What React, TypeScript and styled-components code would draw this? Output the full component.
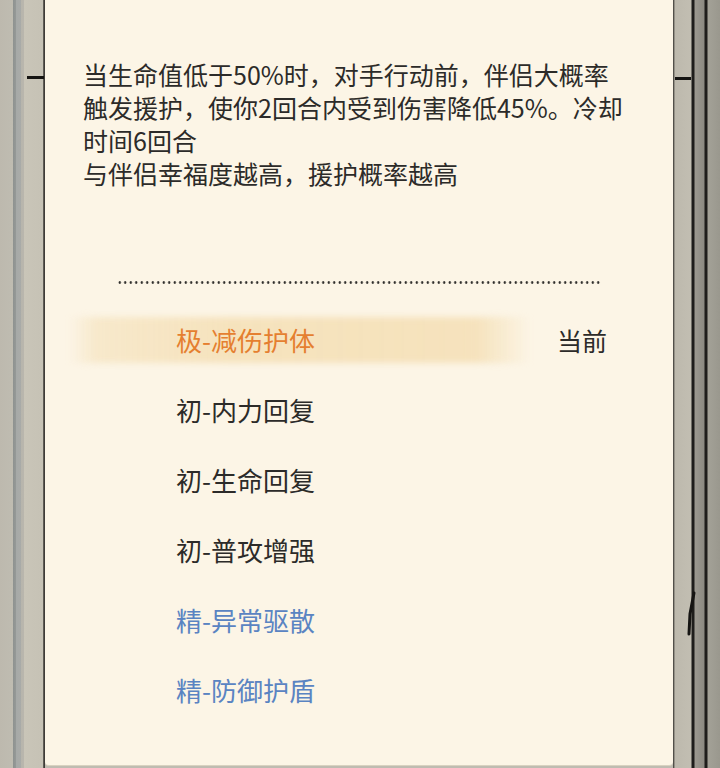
import React from "react";
import styled, { createGlobalStyle } from "styled-components";

const Global = createGlobalStyle`
  html, body { margin: 0; padding: 0; }
  body { background: #bfbcb1; font-family: "Noto Sans CJK SC", "Noto Sans", sans-serif; }
`;

const Page = styled.div`
  display: flex;
  width: 720px;
  height: 768px;
  overflow: hidden;
  background: #bfbcb1;
`;

const LeftFrame = styled.div`
  position: relative;
  width: 45px;
  flex: none;
  background: linear-gradient(
    to right,
    #bdb9ae 0px,
    #bfbcb1 13px,
    #8e9290 13px,
    #959997 16px,
    #a6a9a7 16px,
    #a9aba8 21px,
    #b7b5ac 21px,
    #b9b6ad 24px,
    #c9c5b8 24px,
    #c6c2b5 43px,
    #6e6b63 43px,
    #2f2d2a 45px
  );
`;

const RightFrame = styled.div`
  position: relative;
  flex: 1;
  background: linear-gradient(
    to right,
    #3a3834 0px,
    #6a675f 1px,
    #bdb9ad 2px,
    #c2beb2 18px,
    #1e1d1b 19px,
    #1e1d1b 21px,
    #9b988f 22px,
    #8c8a82 31px,
    #1e1d1b 32px,
    #1e1d1b 34px,
    #a3a197 35px,
    #99978d 48px
  );
`;

const Notch = styled.div<{ $left: number; $width: number; $top: number }>`
  position: absolute;
  top: ${(p) => p.$top}px;
  left: ${(p) => p.$left}px;
  width: ${(p) => p.$width}px;
  height: 3px;
  background: #151412;
`;

const Scratch = styled.svg`
  position: absolute;
  left: 12px;
  top: 590px;
`;

const Panel = styled.div`
  width: 628px;
  flex: none;
  height: 766px;
  box-sizing: border-box;
  background: #fcf5e6;
  border-bottom: 1px solid #d9d2c0;
  border-radius: 0 0 4px 4px;
  padding-top: 58px;
  display: flex;
  flex-direction: column;
`;

const Description = styled.p`
  margin: 0 0 0 38px;
  font-size: 25px;
  line-height: 33px;
  color: #2c2b29;
  white-space: nowrap;
`;

const Divider = styled.div`
  margin: 91px 0 0 72px;
  width: 484px;
  height: 3px;
  background-image: radial-gradient(circle, #2f2e2b 1px, transparent 1.5px);
  background-size: 5.5px 3px;
  background-repeat: repeat-x;
`;

const List = styled.div`
  margin-top: 21px;
  display: flex;
  flex-direction: column;
`;

const Row = styled.div`
  position: relative;
  height: 70px;
  display: flex;
  align-items: center;
`;

const Glow = styled.div`
  position: absolute;
  left: 24px;
  width: 462px;
  top: 12px;
  height: 46px;
  background: linear-gradient(
    to right,
    rgba(246, 230, 198, 0) 0%,
    rgba(246, 230, 198, 0.85) 6%,
    rgba(245, 225, 186, 0.95) 35%,
    rgba(245, 224, 184, 0.9) 88%,
    rgba(246, 230, 198, 0) 100%
  );
  filter: blur(3px);
`;

type Tier = "top" | "basic" | "fine";

const tierColor: Record<Tier, string> = {
  top: "#e57f30",
  basic: "#2c2b29",
  fine: "#5a84c2",
};

const Label = styled.span<{ $tier: Tier }>`
  position: relative;
  margin-left: 131px;
  width: 381px;
  font-size: 26px;
  line-height: 34px;
  color: ${(p) => tierColor[p.$tier]};
`;

const Status = styled.span`
  position: relative;
  font-size: 25px;
  line-height: 34px;
  color: #2c2b29;
`;

const items: { name: string; tier: Tier; current?: boolean }[] = [
  { name: "极-减伤护体", tier: "top", current: true },
  { name: "初-内力回复", tier: "basic" },
  { name: "初-生命回复", tier: "basic" },
  { name: "初-普攻增强", tier: "basic" },
  { name: "精-异常驱散", tier: "fine" },
  { name: "精-防御护盾", tier: "fine" },
];

export default function App() {
  return (
    <>
      <Global />
      <Page>
        <LeftFrame>
          <Notch $left={27} $width={17} $top={76} />
        </LeftFrame>
        <Panel>
          <Description>
            当生命值低于50%时，对手行动前，伴侣大概率
            <br />
            触发援护，使你2回合内受到伤害降低45%。冷却
            <br />
            时间6回合
            <br />
            与伴侣幸福度越高，援护概率越高
          </Description>
          <Divider />
          <List>
            {items.map((it) => (
              <Row key={it.name}>
                {it.current && <Glow />}
                <Label $tier={it.tier}>{it.name}</Label>
                {it.current && <Status>当前</Status>}
              </Row>
            ))}
          </List>
        </Panel>
        <RightFrame>
          <Notch $left={2} $width={16} $top={77} />
          <Scratch width="12" height="50" viewBox="0 0 12 50">
            <path d="M9 3 L5 24 L4 44" stroke="#151412" strokeWidth="3" fill="none" strokeLinecap="round" />
          </Scratch>
        </RightFrame>
      </Page>
    </>
  );
}
